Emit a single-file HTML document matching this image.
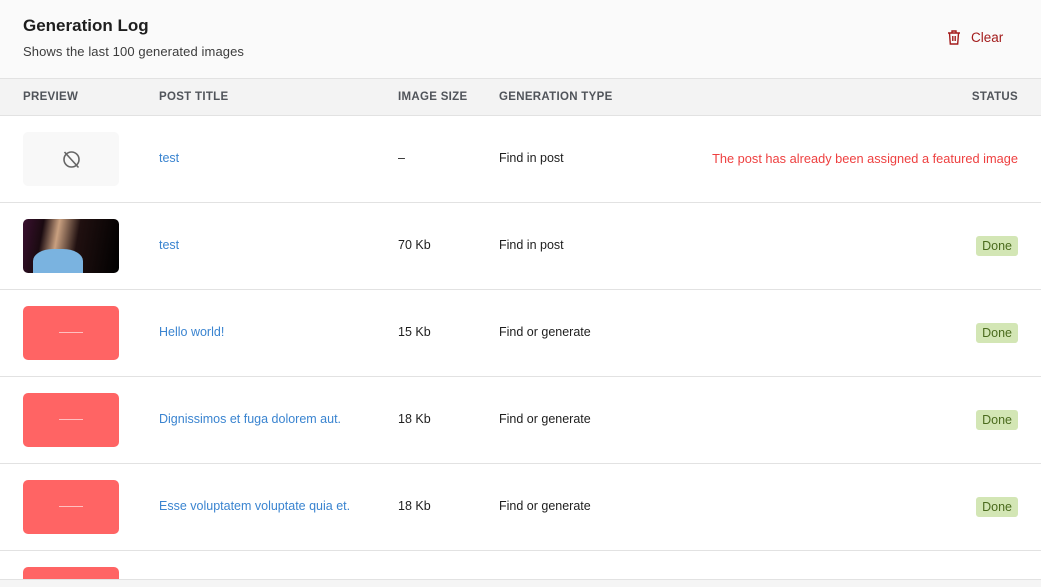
<!DOCTYPE html>
<html><head><style>
*{box-sizing:border-box;margin:0;padding:0}
html,body{width:1041px;height:587px;overflow:hidden}
body{background:#f5f5f5;font-family:"Liberation Sans",sans-serif;position:relative}
.wrap{position:absolute;left:0;top:0;width:1041px;height:580px;background:#fff;border-bottom:1px solid #e2e2e2;overflow:hidden}
.head{height:79px;background:#fafafa;border-bottom:1px solid #e2e2e2;position:relative}
.head h1{position:absolute;left:23px;top:16px;font-size:17px;font-weight:bold;color:#1e1e1e}
.head p{position:absolute;left:23px;top:44px;font-size:13px;color:#3c3c3c;letter-spacing:.1px}
.clear{position:absolute;left:947px;top:30px;color:#a31b1b;font-size:13.5px;display:flex;align-items:center;gap:10px}
.th{height:37px;background:#f3f3f3;border-bottom:1px solid #e2e2e2;position:relative;font-size:11.5px;font-weight:bold;color:#50545a;letter-spacing:.3px}
.th span{position:absolute;top:12px}
.row{height:87px;border-bottom:1px solid #e2e2e2;position:relative;font-size:12.5px;color:#1e1e1e}
.row .t{position:absolute;left:23px;top:16px;width:96px;height:54px;border-radius:5px;background:#ff6464}
.row .c{position:absolute;top:35px}
.a{color:#3a84d0}
.done{position:absolute;right:23px;top:33px;background:#d3e6b5;color:#4a6b1d;border-radius:3px;padding:3px 6px;font-size:12.5px;line-height:14px}
.line{position:absolute;left:36px;top:26px;width:24px;height:1px;background:#ffc0c0}
</style></head><body>
<div class="wrap">
<div class="head"><h1>Generation Log</h1><p>Shows the last 100 generated images</p>
<div class="clear"><svg width="14" height="15" viewBox="0 0 14 15" fill="none" stroke="#a31b1b" stroke-width="1.4"><path d="M1 3h12M5 3V1h4v2M2.5 3l.8 11h7.4l.8-11M5.8 6v5M8.2 6v5"/></svg>Clear</div></div>
<div class="th"><span style="left:23px">PREVIEW</span><span style="left:159px">POST TITLE</span><span style="left:398px">IMAGE SIZE</span><span style="left:499px">GENERATION TYPE</span><span style="right:23px">STATUS</span></div>
<div class="row"><div class="t" style="background:#f8f8f8"><svg style="position:absolute;left:38px;top:17px" width="21" height="21" viewBox="0 0 21 21" fill="none" stroke="#666" stroke-width="1.6"><circle cx="10.5" cy="10.5" r="7.5"/><path d="M3.5 3l14 15.5"/></svg></div>
<span class="c a" style="left:159px">test</span><span class="c" style="left:398px">–</span><span class="c" style="left:499px">Find in post</span><span class="c" style="right:23px;color:#ee4040;font-size:12.8px">The post has already been assigned a featured image</span></div>
<div class="row"><div class="t" style="background:linear-gradient(100deg,#3a1030 0%,#1a0a10 20%,#c9a080 35%,#201010 55%,#000 100%);overflow:hidden"><div style="position:absolute;left:10px;top:30px;width:50px;height:30px;border-radius:40% 40% 0 0;background:#7ab3e0"></div></div>
<span class="c a" style="left:159px">test</span><span class="c" style="left:398px">70 Kb</span><span class="c" style="left:499px">Find in post</span><span class="done">Done</span></div>
<div class="row"><div class="t"><div class="line"></div></div><span class="c a" style="left:159px">Hello world!</span><span class="c" style="left:398px">15 Kb</span><span class="c" style="left:499px">Find or generate</span><span class="done">Done</span></div>
<div class="row"><div class="t"><div class="line"></div></div><span class="c a" style="left:159px">Dignissimos et fuga dolorem aut.</span><span class="c" style="left:398px">18 Kb</span><span class="c" style="left:499px">Find or generate</span><span class="done">Done</span></div>
<div class="row"><div class="t"><div class="line"></div></div><span class="c a" style="left:159px">Esse voluptatem voluptate quia et.</span><span class="c" style="left:398px">18 Kb</span><span class="c" style="left:499px">Find or generate</span><span class="done">Done</span></div>
<div class="row" style="border:none"><div class="t"></div></div>
</div>
</body></html>
